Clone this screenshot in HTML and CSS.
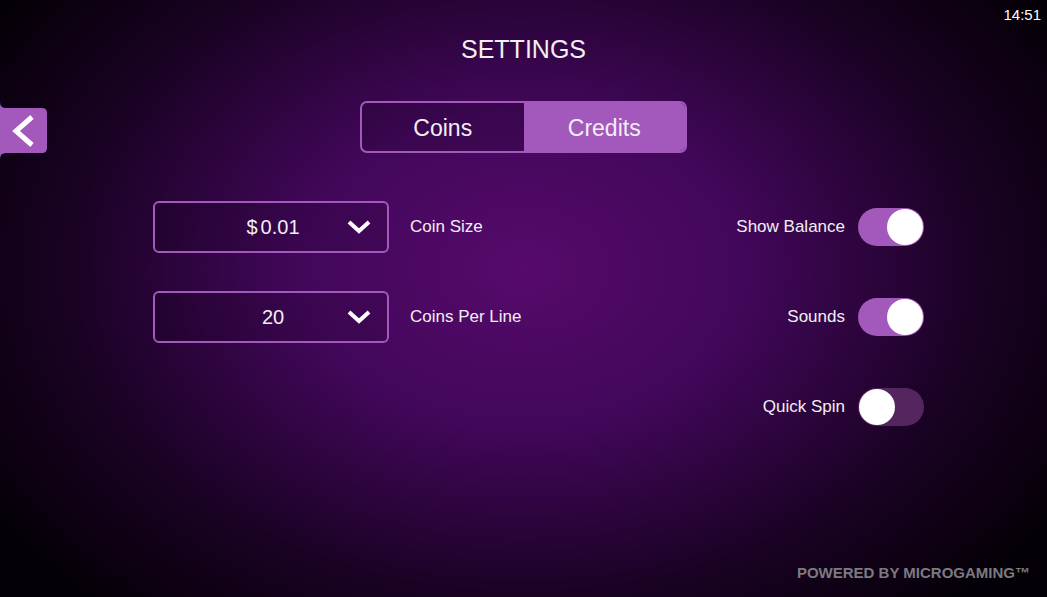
FILE: index.html
```html
<!DOCTYPE html>
<html lang="en">
<head>
    <meta charset="UTF-8">
    <meta name="viewport" content="width=device-width, initial-scale=1.0">
    <title>Settings</title>
    <link rel="stylesheet" href="styles.css">
</head>
<body>

    <div class="screen">
        <div class="clock">14:51</div>

        <button class="back-tab" aria-label="Back">
            <svg width="48" height="58" viewBox="0 0 48 58">
                <path d="M0 0 Q0 6 6 6 H42 Q47 6 47 11 V46 Q47 51 42 51 H6 Q0 51 0 57 Z" fill="#a259bb"/>
                <path d="M32 15 L16 29 L32 43" fill="none" stroke="#fff" stroke-width="5" stroke-linejoin="miter"/>
            </svg>
        </button>

        <h1 class="title">SETTINGS</h1>

        <div class="segment">
            <button class="segment-btn">Coins</button>
            <button class="segment-btn active">Credits</button>
        </div>

        <div class="options">
            <div class="option-col">
                <div class="option-row">
                    <div class="dropdown">
                        <span class="dropdown-value">$<span class="thin-gap"></span>0.01</span>
                        <svg class="chevron" width="24" height="14" viewBox="0 0 24 14">
                            <path d="M2 2 L12 11 L22 2" fill="none" stroke="#fff" stroke-width="4"/>
                        </svg>
                    </div>
                    <span class="option-label">Coin Size</span>
                </div>
                <div class="option-row">
                    <div class="dropdown">
                        <span class="dropdown-value">20</span>
                        <svg class="chevron" width="24" height="14" viewBox="0 0 24 14">
                            <path d="M2 2 L12 11 L22 2" fill="none" stroke="#fff" stroke-width="4"/>
                        </svg>
                    </div>
                    <span class="option-label">Coins Per Line</span>
                </div>
            </div>

            <div class="option-col right">
                <div class="option-row">
                    <span class="option-label">Show Balance</span>
                    <div class="toggle on"><span class="knob"></span></div>
                </div>
                <div class="option-row">
                    <span class="option-label">Sounds</span>
                    <div class="toggle on"><span class="knob"></span></div>
                </div>
                <div class="option-row">
                    <span class="option-label">Quick Spin</span>
                    <div class="toggle"><span class="knob"></span></div>
                </div>
            </div>
        </div>

        <div class="powered">POWERED BY MICROGAMING™</div>
    </div>

</body>
</html>
```

FILE: styles.css
```css
body {
    margin: 0;
    padding: 0;
    background-color: #000;
    font-family: "Liberation Sans", Arial, sans-serif;
    color: #f2eef4;
}

.screen {
    position: relative;
    width: 1047px;
    height: 597px;
    overflow: hidden;
    display: flex;
    flex-direction: column;
    align-items: center;
    background: radial-gradient(ellipse 60% 76% at 50% 45%, #560a6c 0%, #42075a 35%, #1a0224 72%, #050007 100%);
}

.clock {
    position: absolute;
    top: 6px;
    right: 6px;
    font-size: 15px;
    color: #fff;
}

.back-tab {
    position: absolute;
    left: 0;
    top: 102px;
    padding: 0;
    border: none;
    background: none;
    line-height: 0;
    cursor: pointer;
}

.title {
    margin: 35px 0 0 0;
    font-size: 25px;
    line-height: 29px;
    font-weight: normal;
}

.segment {
    display: flex;
    margin-top: 37px;
    width: 327px;
    height: 52px;
    box-sizing: border-box;
    border: 2px solid #a259bb;
    border-radius: 7px;
    overflow: hidden;
}

.segment-btn {
    flex: 1;
    border: none;
    background: rgba(0, 0, 0, 0.12);
    color: #f2eef4;
    font-family: inherit;
    font-size: 23px;
    padding: 3px 0 0 0;
    cursor: pointer;
}

.segment-btn.active {
    background-color: #a259bb;
}

.options {
    align-self: stretch;
    display: flex;
    justify-content: space-between;
    margin-top: 48px;
    padding: 0 123px 0 153px;
}

.option-col {
    display: flex;
    flex-direction: column;
    gap: 38px;
}

.option-col.right {
    align-items: flex-end;
}

.option-row {
    display: flex;
    align-items: center;
    height: 52px;
}

.option-label {
    font-size: 17px;
}

.option-col .dropdown + .option-label {
    margin-left: 21px;
}

.option-col.right .option-label {
    margin-right: 13px;
}

.dropdown {
    display: grid;
    grid-template-columns: 1fr auto 1fr;
    align-items: center;
    width: 236px;
    height: 52px;
    box-sizing: border-box;
    border: 2px solid #a259bb;
    border-radius: 6px;
    background: rgba(0, 0, 0, 0.1);
}

.dropdown-value {
    grid-column: 2;
    font-size: 20px;
    padding-left: 4px;
}

.thin-gap {
    display: inline-block;
    width: 3px;
}

.chevron {
    grid-column: 3;
    justify-self: end;
    margin-right: 16px;
}

.toggle {
    display: flex;
    justify-content: flex-start;
    width: 66px;
    height: 38px;
    box-sizing: border-box;
    padding: 1px;
    border-radius: 19px;
    background-color: #55255f;
}

.toggle.on {
    justify-content: flex-end;
    background-color: #a259bb;
}

.knob {
    width: 36px;
    height: 36px;
    border-radius: 50%;
    background-color: #fff;
}

.powered {
    align-self: flex-end;
    margin-top: auto;
    margin-right: 17px;
    margin-bottom: 16px;
    font-size: 15px;
    font-weight: bold;
    color: #7c7a80;
}
```
